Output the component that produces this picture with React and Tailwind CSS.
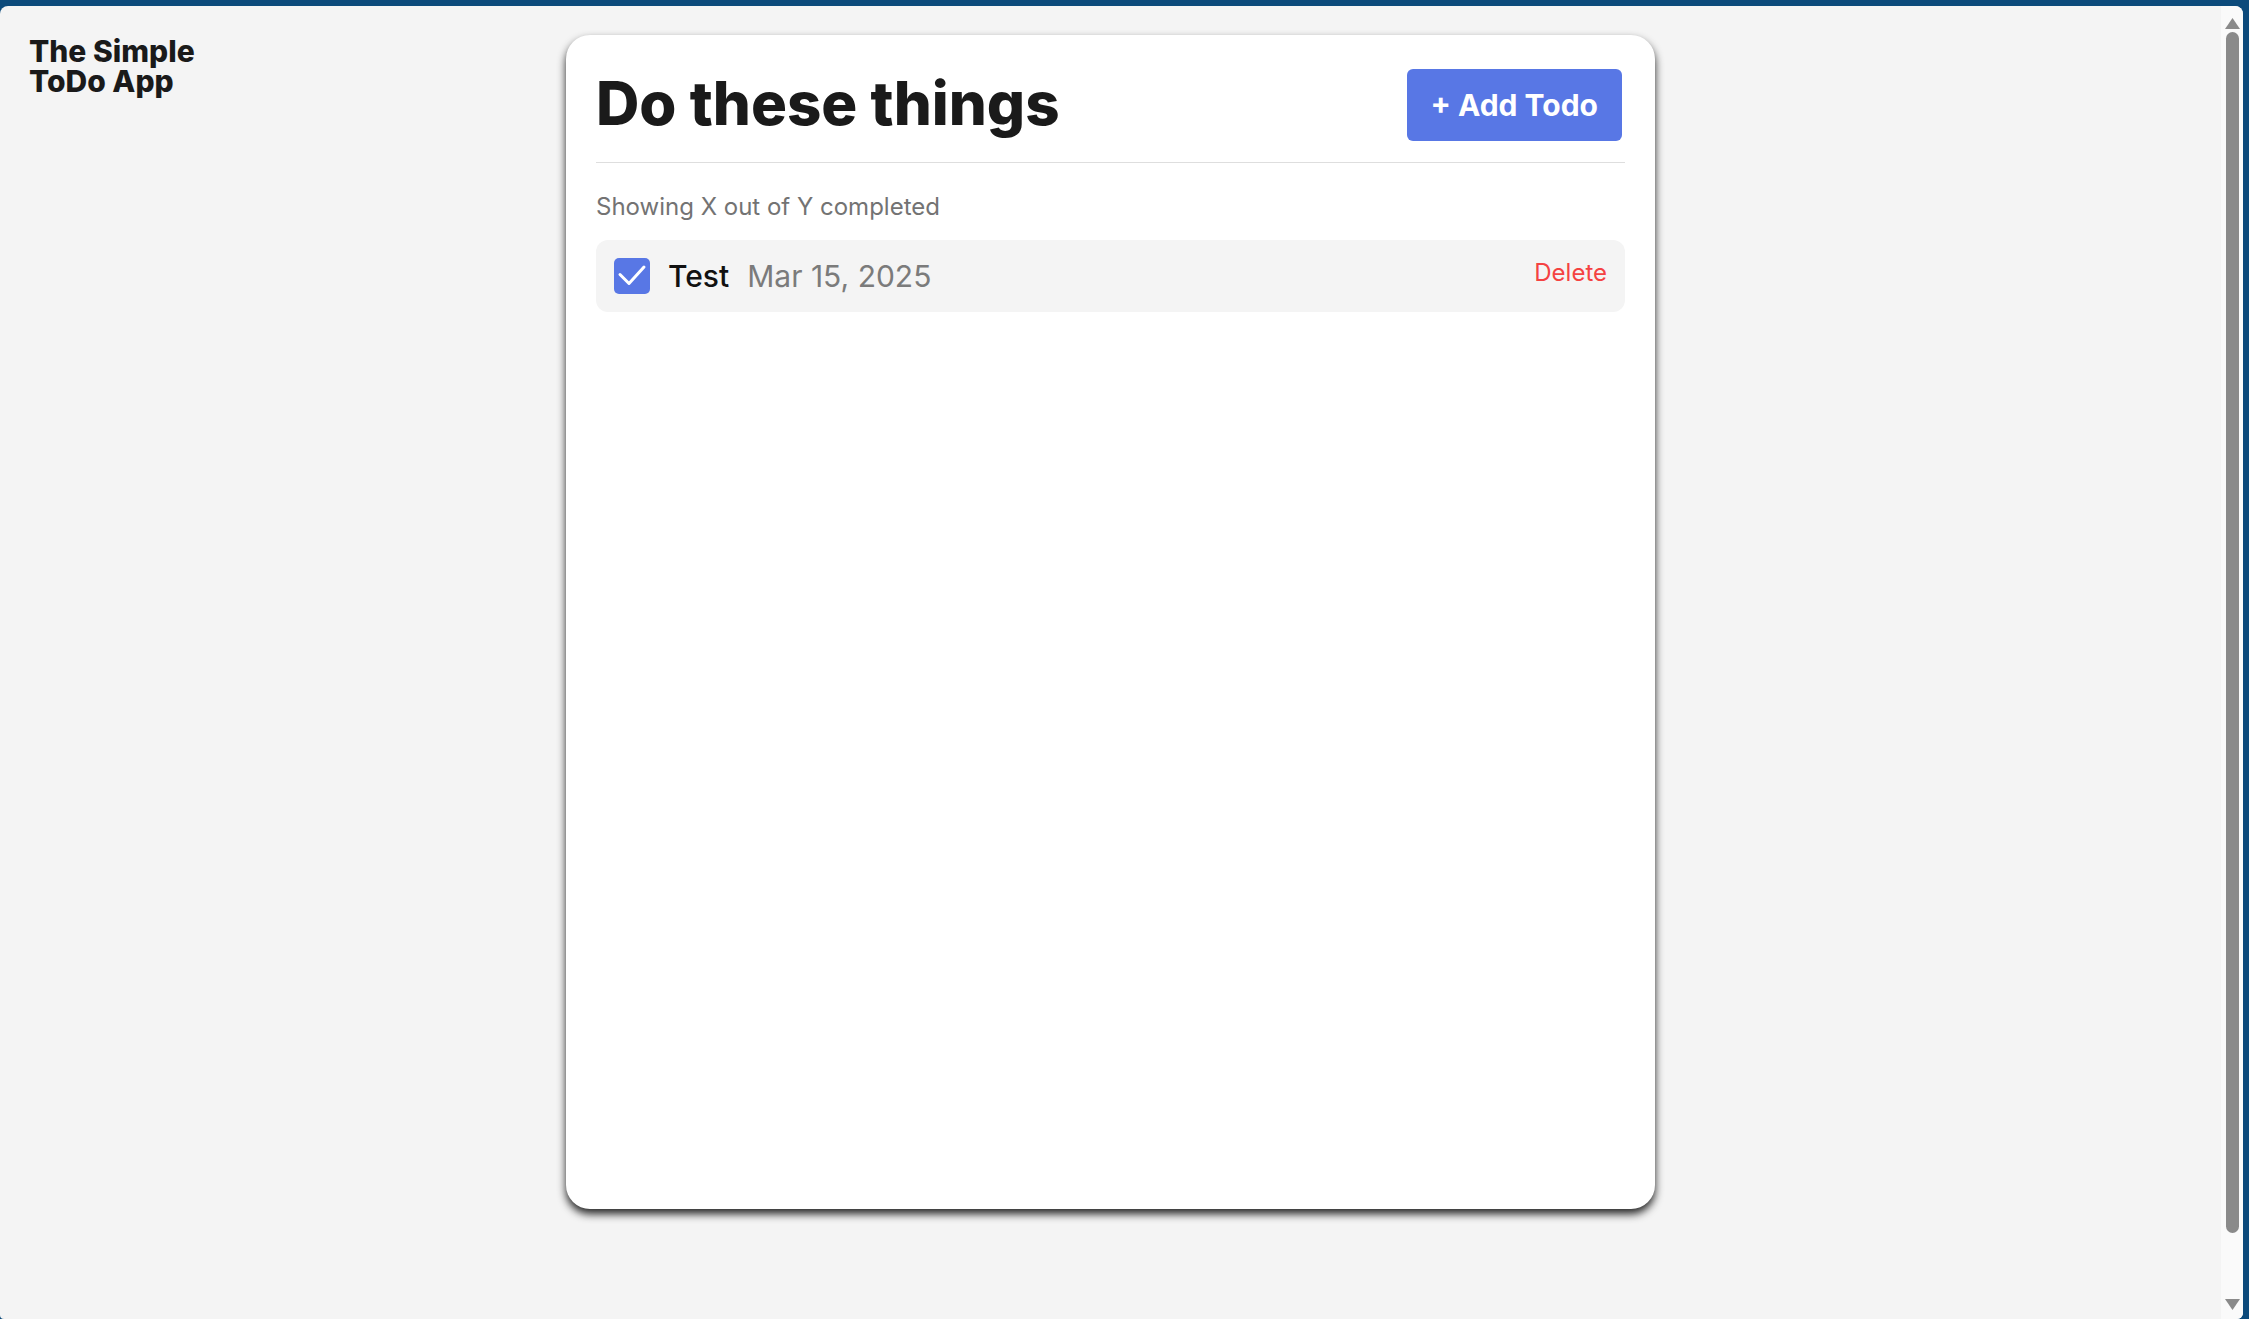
import { useState } from 'react'

const todos = [{ id: 1, title: 'Test', date: 'Mar 15, 2025', done: true }]

function Checkbox({ checked, onChange }) {
  return (
    <button
      onClick={onChange}
      className="w-[36px] h-[36px] rounded-[5px] bg-[#5877e5] flex items-center justify-center shrink-0"
    >
      {checked && (
        <svg viewBox="0 0 36 36" className="w-[36px] h-[36px]" fill="none">
          <path d="M6 16.5 L15 25.5 L30 9" stroke="white" strokeWidth="3" strokeLinecap="round" strokeLinejoin="round" />
        </svg>
      )}
    </button>
  )
}

function FakeScrollbar() {
  return (
    <div className="w-[22px] bg-[#fafafa] flex flex-col items-center pt-[12px] pb-[9px]">
      <svg viewBox="0 0 15 11" className="w-[15px] h-[11px]">
        <path d="M7.5 0 L15 11 L0 11 Z" fill="#8a8a8a" />
      </svg>
      <div className="w-[13px] flex-1 mt-[3px] mb-[66px] rounded-full bg-[#8a8a8a]" />
      <svg viewBox="0 0 15 11" className="w-[15px] h-[11px]">
        <path d="M0 0 L15 0 L7.5 11 Z" fill="#8a8a8a" />
      </svg>
    </div>
  )
}

export default function App() {
  const [items, setItems] = useState(todos)

  function toggle(id) {
    setItems(items.map(t => (t.id === id ? { ...t, done: !t.done } : t)))
  }

  function remove(id) {
    setItems(items.filter(t => t.id !== id))
  }

  return (
    <div className="h-screen w-full bg-[#0c4a7b] pt-[6px] pr-[6px] flex font-['Inter',sans-serif]">
      <div className="flex-1 flex rounded-t-[8px] rounded-bl-[4px] rounded-br-[6px] overflow-hidden bg-[#f4f4f4]">
        <main className="flex-1 grid grid-cols-[1fr_auto_1fr] items-start p-[29px]">
          {/* Logo */}
          <h2 className="pt-[1px] text-[30px] leading-[30px] font-extrabold text-[#1a1a1a]">
            The Simple
            <br />
            ToDo App
          </h2>

          {/* Card */}
          <section className="w-[1089px] h-[1174px] bg-white rounded-3xl shadow-[0_5px_8px_rgba(0,0,0,0.85)] px-[30px]">
            <div className="flex items-center justify-between pt-[34px] pb-[21px] border-b border-[#dedede]">
              <h1 className="text-[60px] leading-[60px] pb-[5px] font-extrabold text-[#1a1a1a]">
                Do these things
              </h1>
              <button className="h-[72px] px-6 mr-[3px] rounded-md bg-[#5877e5] text-white text-[30px] font-bold">
                + Add Todo
              </button>
            </div>

            <p className="mt-[28px] text-[24px] leading-[32px] text-[#737373]">
              Showing X out of Y completed
            </p>

            <ul className="mt-[17px] flex flex-col gap-3">
              {items.map(t => (
                <li key={t.id} className="flex items-start justify-between p-[18px] rounded-xl bg-[#f4f4f4]">
                  <div className="flex items-center gap-[18px] h-[36px]">
                    <Checkbox checked={t.done} onChange={() => toggle(t.id)} />
                    <span className="text-[30px] font-medium text-[#111]">{t.title}</span>
                    <span className="text-[30px] text-[#7b7b7b]">{t.date}</span>
                  </div>
                  <button onClick={() => remove(t.id)} className="text-[24px] leading-[28px] mt-[1px] text-[#f44242]">
                    Delete
                  </button>
                </li>
              ))}
            </ul>
          </section>

          <div />
        </main>
        <FakeScrollbar />
      </div>
    </div>
  )
}
